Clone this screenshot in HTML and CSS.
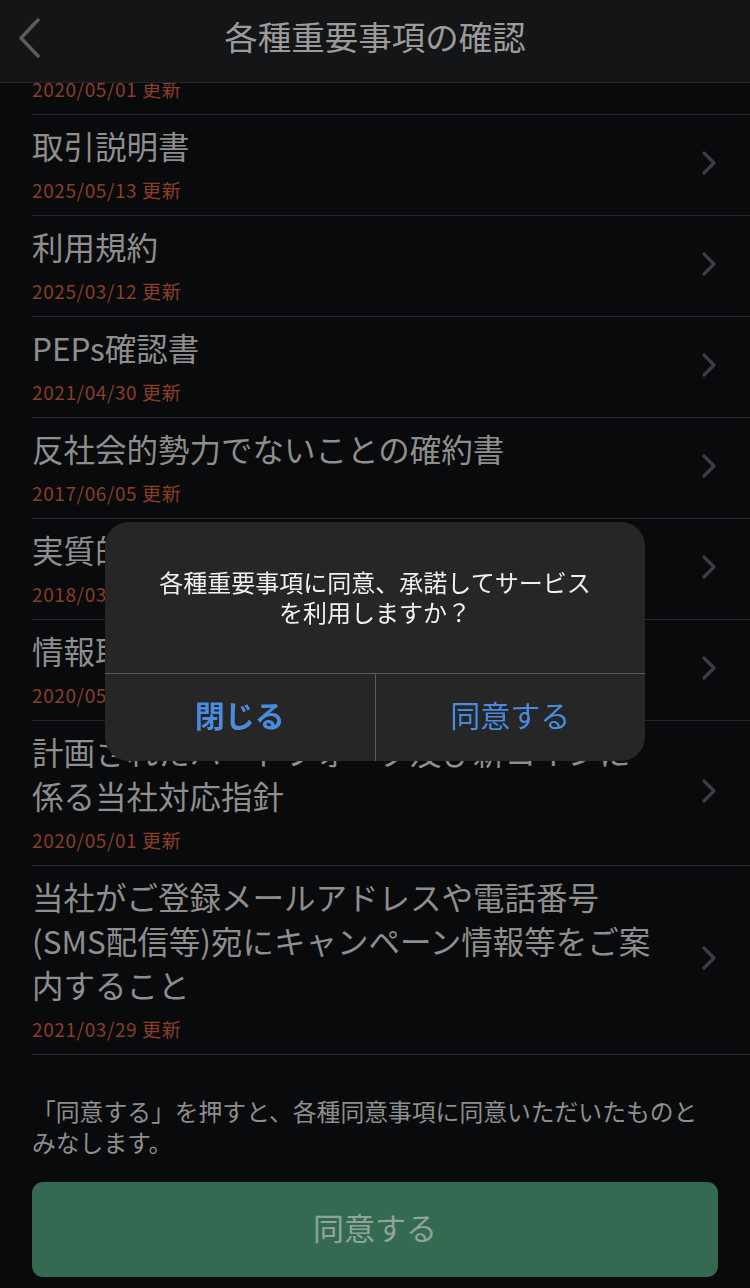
FILE: index.html
```html
<!DOCTYPE html>
<html lang="ja">
<head>
    <meta charset="UTF-8">
    <meta name="viewport" content="width=device-width, initial-scale=1.0">
    <title>各種重要事項の確認</title>
    <link rel="stylesheet" href="styles.css">
</head>
<body>
    <header class="nav">
        <svg class="back" width="24" height="40" viewBox="0 0 24 40">
            <path d="M20 2 L3 20 L20 38" fill="none" stroke="#5b5b5b" stroke-width="3.5" stroke-linecap="round" stroke-linejoin="round"/>
        </svg>
        <h1 class="nav-title">各種重要事項の確認</h1>
    </header>

    <ul class="docs">
        <li class="doc-row cut">
            <div class="doc-text">
                <p class="doc-date">2020/05/01 更新</p>
            </div>
        </li>
        <li class="doc-row">
            <div class="doc-text">
                <p class="doc-title">取引説明書</p>
                <p class="doc-date">2025/05/13 更新</p>
            </div>
            <svg class="chev" width="16" height="26" viewBox="0 0 16 26"><path d="M3 3 L13 13 L3 23"/></svg>
        </li>
        <li class="doc-row">
            <div class="doc-text">
                <p class="doc-title">利用規約</p>
                <p class="doc-date">2025/03/12 更新</p>
            </div>
            <svg class="chev" width="16" height="26" viewBox="0 0 16 26"><path d="M3 3 L13 13 L3 23"/></svg>
        </li>
        <li class="doc-row">
            <div class="doc-text">
                <p class="doc-title">PEPs確認書</p>
                <p class="doc-date">2021/04/30 更新</p>
            </div>
            <svg class="chev" width="16" height="26" viewBox="0 0 16 26"><path d="M3 3 L13 13 L3 23"/></svg>
        </li>
        <li class="doc-row">
            <div class="doc-text">
                <p class="doc-title">反社会的勢力でないことの確約書</p>
                <p class="doc-date">2017/06/05 更新</p>
            </div>
            <svg class="chev" width="16" height="26" viewBox="0 0 16 26"><path d="M3 3 L13 13 L3 23"/></svg>
        </li>
        <li class="doc-row">
            <div class="doc-text">
                <p class="doc-title">実質的支配者に関する申告書</p>
                <p class="doc-date">2018/03/01 更新</p>
            </div>
            <svg class="chev" width="16" height="26" viewBox="0 0 16 26"><path d="M3 3 L13 13 L3 23"/></svg>
        </li>
        <li class="doc-row">
            <div class="doc-text">
                <p class="doc-title">情報取扱いに関する同意書</p>
                <p class="doc-date">2020/05/01 更新</p>
            </div>
            <svg class="chev" width="16" height="26" viewBox="0 0 16 26"><path d="M3 3 L13 13 L3 23"/></svg>
        </li>
        <li class="doc-row">
            <div class="doc-text">
                <p class="doc-title">計画されたハードフォーク及び新コインに係る当社対応指針</p>
                <p class="doc-date">2020/05/01 更新</p>
            </div>
            <svg class="chev" width="16" height="26" viewBox="0 0 16 26"><path d="M3 3 L13 13 L3 23"/></svg>
        </li>
        <li class="doc-row">
            <div class="doc-text">
                <p class="doc-title">当社がご登録メールアドレスや電話番号(SMS配信等)宛にキャンペーン情報等をご案内すること</p>
                <p class="doc-date">2021/03/29 更新</p>
            </div>
            <svg class="chev" width="16" height="26" viewBox="0 0 16 26"><path d="M3 3 L13 13 L3 23"/></svg>
        </li>
    </ul>

    <p class="note">「同意する」を押すと、各種同意事項に同意いただいたものとみなします。</p>
    <div class="agree-wrap">
        <button class="agree-btn">同意する</button>
    </div>

    <!-- alert -->
    <div class="overlay">
        <div class="alert">
            <p class="alert-msg">各種重要事項に同意、承諾してサービス<br>を利用しますか？</p>
            <div class="alert-actions">
                <button class="alert-btn bold">閉じる</button>
                <button class="alert-btn">同意する</button>
            </div>
        </div>
    </div>
</body>
</html>
```

FILE: styles.css
```css
* {
    box-sizing: border-box;
}
body {
    margin: 0;
    background-color: #080a0c;
    font-family: "Noto Sans CJK JP", "Noto Sans", sans-serif;
    color: #8e8e8e;
}
p {
    margin: 0;
}
.nav {
    position: relative;
    z-index: 1;
    height: 83px;
    display: flex;
    align-items: center;
    justify-content: center;
    background-color: #141516;
    border-bottom: 1px solid #232527;
    padding-bottom: 10px;
}
.back {
    position: absolute;
    left: 18px;
    top: 18px;
}
.nav-title {
    margin: 0;
    font-size: 33.5px;
    font-weight: 400;
    color: #9b9b9b;
    line-height: 44px;
}
.docs {
    list-style: none;
    margin: 0;
    padding: 0;
}
.doc-row {
    display: flex;
    align-items: center;
    margin-left: 32px;
    padding: 8px 0 12px;
    border-bottom: 1px solid #24262a;
}
.doc-row.cut {
    margin-top: -7px;
    padding-top: 0;
}
.doc-text {
    flex: 0 0 624px;
}
.doc-title {
    font-size: 31.5px;
    line-height: 44px;
    color: #8e8e8e;
    margin-bottom: 10px;
}
.doc-date {
    font-size: 19px;
    line-height: 26px;
    letter-spacing: 0.6px;
    color: #8b3d27;
}
.chev {
    margin-left: auto;
    margin-right: 33px;
}
.chev path {
    fill: none;
    stroke: #3b3d40;
    stroke-width: 3.2;
    stroke-linecap: round;
    stroke-linejoin: round;
}
.note {
    margin: 40px 32px 0;
    font-size: 23.8px;
    line-height: 31px;
    color: #8e8e8e;
}
.agree-wrap {
    padding: 25px 32px 13px;
}
.agree-btn {
    display: block;
    width: 100%;
    height: 95px;
    border: none;
    border-radius: 11px;
    background-color: #336a51;
    color: #8fa39a;
    font-family: inherit;
    font-size: 31px;
    padding: 0 0 7px;
}
.overlay {
    position: fixed;
    inset: 0;
    display: flex;
    align-items: center;
    justify-content: center;
    padding-bottom: 6px;
}
.alert {
    width: 540px;
    background-color: #262627;
    border-radius: 24px;
    overflow: hidden;
}
.alert-msg {
    padding: 45px 20px 46px;
    text-align: center;
    font-size: 24px;
    line-height: 30px;
    color: #f0f0f0;
}
.alert-actions {
    display: flex;
    border-top: 1px solid #5a5a5a;
}
.alert-btn {
    flex: 1;
    height: 87px;
    border: none;
    background: none;
    color: #4a8be0;
    font-family: inherit;
    font-size: 30px;
    padding: 0 0 6px;
}
.alert-btn + .alert-btn {
    border-left: 1px solid #5a5a5a;
}
.alert-btn.bold {
    font-weight: 700;
}
```
